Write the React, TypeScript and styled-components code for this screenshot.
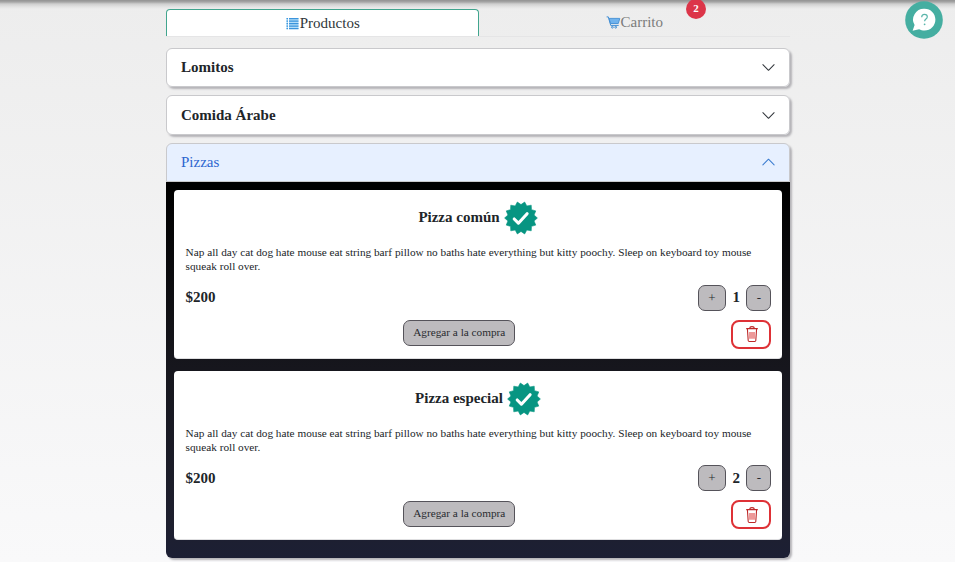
import React from "react";
import styled, { createGlobalStyle } from "styled-components";

const GlobalStyle = createGlobalStyle`
  * { box-sizing: border-box; }
  body {
    margin: 0;
    overflow: hidden;
    font-family: "Liberation Serif", "Times New Roman", serif;
    font-size: 15px;
    color: #212529;
    background: #f3f3f4;
  }
`;

const Page = styled.div`
  height: 562px;
  overflow: hidden;
  background: linear-gradient(#ededed, #f9f9fa);
`;

const TopShadow = styled.div`
  height: 9px;
  background: linear-gradient(#929292 0, #a6a6a6 2px, #cfcfcf 4px, #e4e4e4 7px, #ededed 9px);
`;

const Container = styled.main`
  width: 624px;
  margin: 0 auto 0 166px;
`;

const Tabs = styled.nav`
  display: flex;
  height: 28px;
  border-bottom: 1px solid #e5e5e6;
`;

const Tab = styled.button<{ $active?: boolean }>`
  position: relative;
  display: flex;
  flex: 1;
  align-items: center;
  justify-content: center;
  padding: ${(p) => (p.$active ? "1px 0 0 1px" : "0 0 1px 0")};
  border: 1px solid ${(p) => (p.$active ? "#41a58e" : "transparent")};
  border-bottom: 0;
  border-radius: 4px 4px 0 0;
  background: ${(p) => (p.$active ? "#fff" : "transparent")};
  color: ${(p) => (p.$active ? "#30363a" : "#7b7b7b")};
  font: inherit;
`;

const CountBadge = styled.span`
  position: absolute;
  top: -11px;
  right: 83px;
  width: 20px;
  height: 20px;
  border-radius: 50%;
  background: #dc3549;
  color: #fff;
  font-size: 11px;
  font-weight: 700;
  line-height: 18px;
  text-align: center;
`;

const HelpButton = styled.button`
  position: absolute;
  top: 0.5px;
  left: 905px;
  width: 38px;
  height: 38px;
  padding: 0;
  border: 0;
  background: none;
`;

const Accordion = styled.div`
  display: flex;
  flex-direction: column;
  gap: 8px;
  padding-top: 11px;
`;

const Item = styled.section`
  border-radius: 6px;
  box-shadow: 2px 2px 2px #b5b4b8;
`;

const ItemHeader = styled.button<{ $open?: boolean }>`
  display: flex;
  align-items: center;
  justify-content: space-between;
  width: 100%;
  height: 39.4px;
  padding: 0 13px 0 14px;
  border: 1px solid #c9c9cc;
  border-radius: ${(p) => (p.$open ? "6px 6px 0 0" : "6px")};
  background: ${(p) => (p.$open ? "#e7f0ff" : "#fff")};
  color: ${(p) => (p.$open ? "#2e66cf" : "#212529")};
  font: inherit;
  font-weight: ${(p) => (p.$open ? 400 : 700)};
`;

const ItemBody = styled.div`
  display: flex;
  flex-direction: column;
  gap: 11.6px;
  height: 376px;
  padding: 7.8px 7.6px 0;
  border-radius: 0 0 6px 6px;
  background: linear-gradient(#000 0, #000 8px, #15151b 45%, #1e1f2e 90%, #1c1f34);
`;

const Card = styled.article`
  display: flex;
  flex-direction: column;
  height: 169px;
  padding: 10px 11px 0 12px;
  border: 1px solid #dedee0;
  border-width: 0 0 1px;
  border-radius: 4px;
  background: #fff;
`;

const CardTitle = styled.h2`
  display: flex;
  align-items: center;
  justify-content: center;
  gap: 3px;
  height: 36px;
  margin: 0 0 9.4px;
  font-size: 15px;
  line-height: 17px;
  svg { flex: none; }
`;

const TitleText = styled.span`
  padding-bottom: 0.5px;
`;

const Description = styled.p`
  height: 28px;
  margin: 0 0 11.4px;
  font-size: 11.25px;
  line-height: 14px;
`;

const PriceRow = styled.div`
  display: flex;
  align-items: center;
  justify-content: space-between;
  height: 26px;
  margin-bottom: 9px;
  font-weight: 700;
`;

const Quantity = styled.div`
  display: flex;
  align-items: center;
  gap: 6.5px;
`;

const GreyButton = styled.button<{ $width: number }>`
  width: ${(p) => p.$width}px;
  height: 26px;
  padding: ${(p) => (p.$width > 50 ? "0 0 2px" : "0")};
  border: 1px solid #55535a;
  border-radius: 7px;
  background: #bdbbbe;
  color: #292b30;
  font-family: inherit;
  font-size: ${(p) => (p.$width > 50 ? "11.25px" : "13px")};
`;

const ActionRow = styled.div`
  display: flex;
  align-items: flex-start;
`;

const AddSlot = styled.div`
  display: flex;
  flex: 1;
  justify-content: center;
  padding: 0.4px 0 0 2px;
`;

const DeleteButton = styled.button`
  display: flex;
  align-items: center;
  justify-content: center;
  width: 40.5px;
  height: 29px;
  padding: 0 0 0 1px;
  border: 2px solid #de3136;
  border-radius: 8px;
  background: #fff;
`;

const ListIcon = () => (
  <svg width="14" height="14" viewBox="0 0 14 14">
    <path d="M.5 1H2v11H.5zM3 1h9.5v11H3z" fill="#b5def9" />
    {[1, 3.5, 6, 8.5, 11].map((y) => (
      <path key={y} d={`M.5 ${y}H2v1.2H.5zM3 ${y}h9.5v1.2H3z`} fill="#3b94dc" />
    ))}
  </svg>
);

const CartIcon = () => (
  <svg width="15" height="15" viewBox="0 0 15 15" fill="none" stroke="#438fd5">
    <path d="M3 3.4h10.8l-1.5 5.1H4.5z" fill="#71b3ed" strokeWidth=".9" />
    <path d="M.6 1.9h1.7l2.4 8.5h8" strokeWidth="1" />
    <circle cx="6.4" cy="12.2" r=".9" />
    <circle cx="9.7" cy="12.2" r=".9" />
  </svg>
);

const sealPoints = Array.from({ length: 28 }, (_, i) => {
  const radius = i % 2 ? 13.4 : 16.4;
  const angle = (i * Math.PI) / 14;
  return `${18 + radius * Math.cos(angle)},${18 + radius * Math.sin(angle)}`;
}).join(" ");

const SealIcon = () => (
  <svg width="36" height="36" viewBox="0 0 36 36" strokeLinejoin="round">
    <polygon points={sealPoints} fill="#079582" stroke="#079582" strokeWidth=".6" />
    <path d="M11.2 19l4.2 4.2 8.7-9.5" fill="none" stroke="#fff" strokeWidth="3.1" strokeLinecap="round" />
  </svg>
);

const Chevron = ({ up = false }: { up?: boolean }) => (
  <svg width="15" height="15" viewBox="0 0 16 16" fill="none" stroke={up ? "#3b7cd0" : "#30343a"} strokeLinecap="round" strokeLinejoin="round" strokeWidth="1.1">
    <path d={up ? "M2 10.5l6-6 6 6" : "M2 5l6 6 6-6"} />
  </svg>
);

const HelpIcon = () => (
  <svg width="38" height="38" viewBox="0 0 38 38">
    <circle cx="19" cy="19" r="18.8" fill="#45aea1" />
    <path d="M19.6 7.7c6.1 0 10.8 4.8 10.8 10.9 0 6.2-4.7 11-10.9 11-2 0-3.8-.5-5.4-1.4L7.6 29.7l2-5.6a10.9 10.9 0 0 1 10-16.4z" fill="#fff" />
    <path d="M16.7 16.3c0-2 1-3 2.8-3 1.7 0 2.8 1 2.8 2.5 0 2.3-2.7 2.2-2.7 4.5" fill="none" stroke="#59b5aa" strokeWidth="1.2" />
    <circle cx="19.6" cy="23.3" r=".9" fill="#59b5aa" />
  </svg>
);

const TrashIcon = () => (
  <svg width="14" height="18" viewBox="0 0 14 18" fill="none" stroke="#bd2828" strokeWidth="1.1">
    <path d="M1.2 3.6h11.6M2.4 3.8l.8 11.7q.1 1 1 1h5.6q.9 0 1-1l.8-11.7M4.8 3.4q0-1.8 2.2-1.8t2.2 1.8" />
    <path d="M5 7v6.8M7 7v6.8M9 7v6.8" stroke="#df4545" />
  </svg>
);

const products = [
  { name: "Pizza común", quantity: 1 },
  { name: "Pizza especial", quantity: 2 },
];

const ProductCard = ({ name, quantity }: { name: string; quantity: number }) => (
  <Card>
    <CardTitle><TitleText>{name}</TitleText><SealIcon /></CardTitle>
    <Description>
      Nap all day cat dog hate mouse eat string barf pillow no baths hate everything but kitty poochy. Sleep on keyboard toy mouse squeak roll over.
    </Description>
    <PriceRow>
      <span>$200</span>
      <Quantity>
        <GreyButton $width={28}>+</GreyButton>
        <span>{quantity}</span>
        <GreyButton $width={25}>-</GreyButton>
      </Quantity>
    </PriceRow>
    <ActionRow>
      <AddSlot><GreyButton $width={112}>Agregar a la compra</GreyButton></AddSlot>
      <DeleteButton aria-label="Eliminar"><TrashIcon /></DeleteButton>
    </ActionRow>
  </Card>
);

export default function App() {
  return (
    <Page>
      <GlobalStyle />
      <TopShadow />
      <Container>
        <Tabs>
          <Tab $active><ListIcon />Productos</Tab>
          <Tab><CartIcon />Carrito<CountBadge>2</CountBadge></Tab>
        </Tabs>
        <Accordion>
          <Item><ItemHeader>Lomitos<Chevron /></ItemHeader></Item>
          <Item><ItemHeader>Comida Árabe<Chevron /></ItemHeader></Item>
          <Item>
            <ItemHeader $open>Pizzas<Chevron up /></ItemHeader>
            <ItemBody>
              {products.map((product) => <ProductCard key={product.name} {...product} />)}
            </ItemBody>
          </Item>
        </Accordion>
      </Container>
      <HelpButton aria-label="Ayuda"><HelpIcon /></HelpButton>
    </Page>
  );
}
